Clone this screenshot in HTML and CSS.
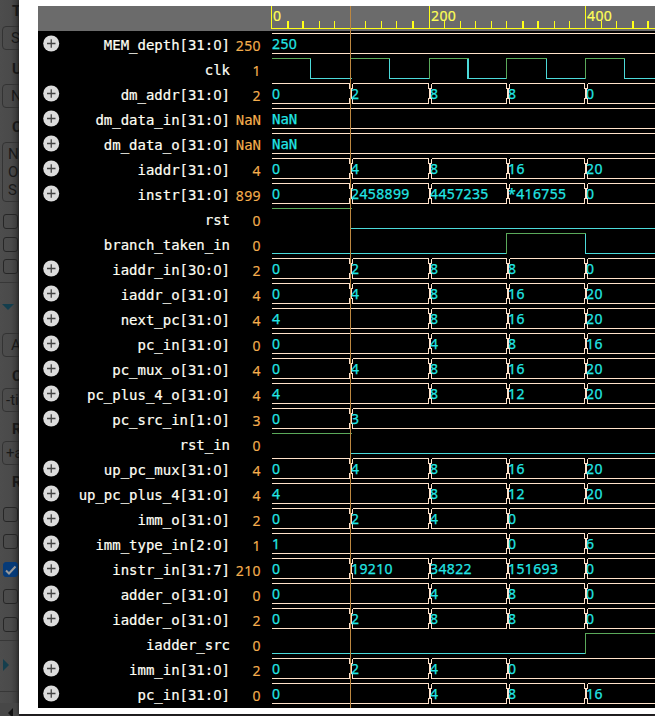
FILE: index.html
```html
<!DOCTYPE html>
<html lang="en">
<head>
<meta charset="utf-8">
<title>Waveform viewer</title>
<link rel="stylesheet" href="styles.css">
</head>
<body>
<aside class="side">
  <b class="cap c1">T</b><span class="field f1">S</span>
  <b class="cap c2">U</b><span class="field f2">N</span>
  <b class="cap c3">C</b><span class="field f3">N<br>O<br>S</span>
  <i class="check k1"></i><i class="check k2"></i><i class="check k3"></i>
  <hr class="h1"><i class="down"></i>
  <span class="field f4">A</span>
  <b class="cap c4">C</b><span class="field f5 flag">-ti</span>
  <b class="cap c5">R</b><span class="field f6 flag">+a</span>
  <b class="cap c6">R</b>
  <i class="check k4"></i><i class="check k5"></i>
  <i class="check on k6"><svg width="16" height="16" viewBox="0 0 16 16"><path d="M3 8.5l3 3 6.5-7" fill="none" stroke="#999" stroke-width="2"/></svg></i>
  <i class="check k7"></i><i class="check k8"></i>
  <hr class="h2"><i class="right"></i><hr class="h3">
  <div class="scroll"><i class="left"></i></div>
</aside>
<main class="panel">
  <section class="viewer">
    <header class="ruler"><svg id="ruler" width="384" height="25"></svg></header>
    <div id="rows"></div>
    <div class="cursor"></div>
  </section>
</main>
<script src="app.js"></script>
</body>
</html>
```
FILE: styles.css
```css
* { box-sizing: border-box; }
body { margin: 0; width: 655px; height: 716px; overflow: hidden; display: flex; background: #272527; font-family: Roboto, sans-serif; }
.side { width: 19px; height: 716px; flex: none; display: flex; flex-direction: column; overflow: hidden; background: linear-gradient(90deg, #4d4d4d 0, #4a4a4a 11px, #393939 19px); color: #191919; }
.side > * { flex: none; }
.cap { font-size: 15px; line-height: 16px; height: 16px; margin-left: 12px; }
.c1 { margin-top: 3px; } .c2 { margin-top: 11px; } .c3 { margin-top: 11px; } .c4 { margin-top: 11px; } .c5 { margin-top: 9px; } .c6 { margin-top: 9px; }
.field { width: 60px; height: 24px; margin-left: 2px; border: 1px solid #333; border-radius: 4px; padding-left: 8px; font-size: 15px; line-height: 22px; }
.f1 { margin-top: 7px; } .f2 { margin-top: 7px; }
.f3 { height: 60px; margin-top: 7px; line-height: 18px; padding: 2px 0 0 5px; }
.f4 { margin-top: 23px; } .f5 { margin-top: 4px; } .f6 { margin-top: 4px; }
.flag { padding-left: 3px; }
.check { display: block; width: 15px; height: 15px; border: 1px solid #262626; border-radius: 3px; margin-left: 3px; }
.k1 { margin-top: 12px; } .k2 { margin-top: 8px; } .k3 { margin-top: 7px; }
.k4 { margin-top: 17px; } .k5 { margin-top: 12px; } .k6 { margin-top: 13px; } .k7 { margin-top: 12px; } .k8 { margin-top: 13px; }
.on { background: #073b78; border-color: #073b78; }
.on svg { display: block; margin: -1px; }
hr { width: 100%; margin: 0; border: 0; border-top: 1px solid #373737; }
.h1 { margin-top: 8px; } .h2 { margin-top: 8px; } .h3 { margin-top: 20px; }
.down, .right, .left { display: block; width: 0; height: 0; border: 6px solid transparent; }
.down { margin: 21px 0 0 2px; border-top-color: #143e4d; border-bottom: 0; }
.right { margin: 18px 0 0 3px; border-left-color: #143e4d; border-right: 0; }
.scroll { margin-top: 11px; padding: 5px 0 0 8px; height: 30px; background: #474747; }
.left { border-width: 5px; border-left: 0; border-right-color: #111; }
.panel { width: 636px; height: 714px; padding: 6px 0 6px 19px; background: #fff; box-shadow: 0 0 4px #0009; }
.viewer { height: 702px; background: #000; position: relative; }
.ruler { height: 25px; background: #6b6b6b; display: flex; justify-content: flex-end; }
.row { height: 25px; display: grid; grid-template-columns: 26px 166px 31px 10px 384px; }
.icon { margin: 4px 0 0 5px; width: 17px; height: 17px; }
.name { font: 14px/25px "DejaVu Sans Mono", monospace; letter-spacing: -.02px; text-align: right; color: #fffff5; white-space: pre; padding-top: 2px; height: 25px; -webkit-text-stroke: .2px; }
.digit { display: inline-block; font-family: "Noto Sans", sans-serif; width: 8.4px; line-height: 14px; }
.value { font: 14px/25px "Noto Sans", sans-serif; letter-spacing: .42px; color: #f4ae4e; text-align: right; padding-top: 2px; height: 25px; -webkit-text-stroke: .15px; }
.value.nan { font-family: "DejaVu Sans Mono", monospace; letter-spacing: 0; }
.wave, #ruler { display: block; grid-column: 5; overflow: hidden; }
.bus { stroke: #ffe2ca; fill: none; shape-rendering: crispEdges; }
.high { stroke: #5aa95a; shape-rendering: crispEdges; }
.low { stroke: #4cdada; shape-rendering: crispEdges; }
.data { font: 14px "Noto Sans", sans-serif; letter-spacing: .37px; fill: #22e6e6; stroke: #22e6e6; stroke-width: .25px; }
.data.nan { font-family: "DejaVu Sans Mono", monospace; letter-spacing: 0; }
.tick { stroke: #ffff18; shape-rendering: crispEdges; }
.time { font: 14px "Noto Sans", sans-serif; letter-spacing: .42px; fill: #ffff55; stroke: #ffff55; stroke-width: .2px; }
.cursor { position: absolute; left: 312px; top: 0; width: 1px; height: 702px; background: #bd8740; }
```
FILE: app.js
```js
// Edges sit every 100 time units; coordinates are relative to the left end of the time axis.
const edge = [0, 79, 158, 236, 314];
// [name, current value, transitions as [edge index, text] or a bit string]
const signals = [
  ['MEM_depth[31:0]', '250', [[0, '250']]],
  ['clk', '1', 'clk'],
  ['dm_addr[31:0]', '2', [[0, '0'], [1, '2'], [2, '8'], [3, '8'], [4, '0']]],
  ['dm_data_in[31:0]', 'NaN', [[0, 'NaN']]],
  ['dm_data_o[31:0]', 'NaN', [[0, 'NaN']]],
  ['iaddr[31:0]', '4', [[0, '0'], [1, '4'], [2, '8'], [3, '16'], [4, '20']]],
  ['instr[31:0]', '899', [[0, '0'], [1, '2458899'], [2, '4457235'], [3, '*416755'], [4, '0']]],
  ['rst', '0', '10000'],
  ['branch_taken_in', '0', '00010'],
  ['iaddr_in[30:0]', '2', [[0, '0'], [1, '2'], [2, '8'], [3, '8'], [4, '0']]],
  ['iaddr_o[31:0]', '4', [[0, '0'], [1, '4'], [2, '8'], [3, '16'], [4, '20']]],
  ['next_pc[31:0]', '4', [[0, '4'], [2, '8'], [3, '16'], [4, '20']]],
  ['pc_in[31:0]', '0', [[0, '0'], [2, '4'], [3, '8'], [4, '16']]],
  ['pc_mux_o[31:0]', '4', [[0, '0'], [1, '4'], [2, '8'], [3, '16'], [4, '20']]],
  ['pc_plus_4_o[31:0]', '4', [[0, '4'], [2, '8'], [3, '12'], [4, '20']]],
  ['pc_src_in[1:0]', '3', [[0, '0'], [1, '3']]],
  ['rst_in', '0', '10000'],
  ['up_pc_mux[31:0]', '4', [[0, '0'], [1, '4'], [2, '8'], [3, '16'], [4, '20']]],
  ['up_pc_plus_4[31:0]', '4', [[0, '4'], [2, '8'], [3, '12'], [4, '20']]],
  ['imm_o[31:0]', '2', [[0, '0'], [1, '2'], [2, '4'], [3, '0']]],
  ['imm_type_in[2:0]', '1', [[0, '1'], [3, '0'], [4, '6']]],
  ['instr_in[31:7]', '210', [[0, '0'], [1, '19210'], [2, '34822'], [3, '151693'], [4, '0']]],
  ['adder_o[31:0]', '0', [[0, '0'], [2, '4'], [3, '8'], [4, '0']]],
  ['iadder_o[31:0]', '2', [[0, '0'], [1, '2'], [2, '8'], [3, '8'], [4, '0']]],
  ['iadder_src', '0', '00001'],
  ['imm_in[31:0]', '2', [[0, '0'], [1, '2'], [2, '4'], [3, '0']]],
  ['pc_in[31:0]', '0', [[0, '0'], [2, '4'], [3, '8'], [4, '16']]]
];
const HI = 2.5, LO = 22.5;
const path = (cls, d) => `<path class="${cls}" d="${d}"/>`;
function bus(list) {
  let out = '';
  list.forEach(([e, text], i) => {
    const start = i ? edge[e] + 2.5 : 1;
    const next = list[i + 1];
    const end = next ? edge[next[0]] - .5 : 384;
    out += path('bus', `M${start} ${HI}H${end}M${start} ${LO}H${end}`);
    if (i) {
      const x = edge[e];
      out += path('bus', `M${x - .5} ${HI}v5h1v5h1v5h1v5M${x + 2.5} ${HI}v5h-1v5h-1v5h-1v5`);
    }
    out += `<text class="data${text === 'NaN' ? ' nan' : ''}" x="${i ? edge[e] + 1.1 : 1}" y="18">${text}</text>`;
  });
  return out;
}
function bits(s) {
  let points;
  if (s === 'clk') points = [[1, 1], [39, 0], [80, 1], [118, 0], [158, 1], [197, 0], [235, 1], [275, 0], [314, 1], [353, 0]];
  else points = [...s].map((b, i) => [i === 0 ? 1 : [0, 80, 158, 235, 314][i], +b]);
  return points.map(([x, b], i) => {
    const end = i + 1 < points.length ? points[i + 1][0] + 1 : 384;
    let out = path(b ? 'high' : 'low', `M${x} ${b ? HI : LO}H${end}`);
    if (i && points[i - 1][1] !== b && x !== 80) out += path(b ? 'high' : 'low', `M${x + .5} ${HI}V${LO}`);
    if (s === 'clk' && x === 197) out += path('low', `M${x - .5} ${HI}V${LO}`);
    return out;
  }).join('');
}
const plus = '<svg class="icon" viewBox="0 0 17 17"><circle cx="8.2" cy="8.5" r="8" fill="#dcdcdc"/><path d="M4 8.5h8.5M8.25 4.2v8.5" stroke="#444" stroke-width="1.3"/></svg>';
document.getElementById('rows').innerHTML = signals.map(([name, value, w]) =>
  `<div class="row">${typeof w === 'string' ? '<span></span>' : plus}<div class="name">${name.replace(/0/g, '<span class="digit">0</span>')}</div><div class="value${value === 'NaN' ? ' nan' : ''}">${value}</div><svg class="wave" width="384" height="25">${typeof w === 'string' ? bits(w) : bus(w)}</svg></div>`
).join('');

let marks = path('tick', 'M0 22.5H384');
[16, 31, 48, 63, 94, 110, 125, 141, 173, 189, 204, 220, 235, 251, 266, 283, 298, 330, 345, 361, 376].forEach(x => {
  marks += path('tick', `M${x + .5} 15V22`);
});
[16, 31, 251, 266, 361, 376, 141].forEach(x => { marks += path('tick', `M${x + 1.5} 15V22`); });
[[0, '0'], [158, '200'], [314, '400']].forEach(([x, t]) => {
  marks += path('tick', `M${x + .5} 0V22`) + `<text class="time" x="${x + 2}" y="15">${t}</text>`;
});
document.getElementById('ruler').innerHTML = marks;
```
